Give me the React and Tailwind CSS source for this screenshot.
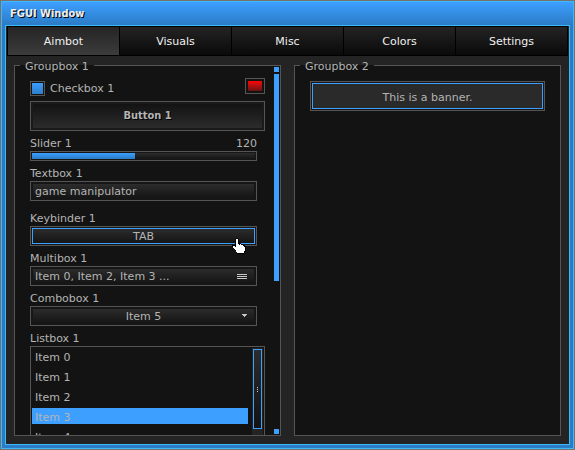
import React from "react";

const tabs = ["Aimbot", "Visuals", "Misc", "Colors", "Settings"];
const items = ["Item 0", "Item 1", "Item 2", "Item 3", "Item 4"];

const frame = "h-5 border border-[#555] bg-[#161616] p-[2px]";
const inner = "h-full w-full bg-linear-to-b from-[#2c2c2c] to-[#151515]";

function Groupbox({ title, children }) {
  return (
    <fieldset className="flex min-h-0 min-w-0 flex-1 flex-col border border-[#555] bg-[#131313]">
      <legend className="ml-[5px] h-[17px] px-[5px] leading-5">{title}</legend>
      <div className="-mt-2 flex min-h-0 flex-1 overflow-hidden">{children}</div>
    </fieldset>
  );
}

function Field({ id, label, className = "", children }) {
  return (
    <div className={`mr-2 flex flex-col ${className}`}>
      <label htmlFor={id} className="h-5 leading-[26px]">{label}</label>
      {children}
    </div>
  );
}

function Cursor() {
  return (
    <svg className="pointer-events-none absolute top-[11px] right-[10px]" width="14" height="16" viewBox="0 0 14 16" shapeRendering="crispEdges" aria-hidden="true">
      <path fill="#000" d="M4 0h2v1h1v4h2v1h2v1h2v1h1v5h-1v2h-1v1H5v-2H4v-1H3v-2H2v-1H1v-1H0V7h3V1h1z" />
      <path fill="#fff" d="M4 1h2v5h1v1h1V6h1v1h2v1h1v1h1v4h-1v2H5v-1H4v-2H3v-1H2v-1H1V8h2v1h1z" />
    </svg>
  );
}

export default function App() {
  return (
    <div className="h-screen bg-[#77716d] p-px font-['Verdana','DejaVu_Sans',sans-serif] text-[11px] text-[#b4b4b4]">
      <main className="flex h-full flex-col border border-[#3db8f8] bg-[#2b7cc6] px-[3px] pb-[3px]">
        <header className="-mx-[3px] h-[23px] bg-linear-to-b from-[#3d9fff] to-[#2b7cc6] pl-2">
          <h1 className="font-['Tahoma','DejaVu_Sans_Condensed',sans-serif] text-[11px] leading-[23px] font-bold text-[#f0f0f0] [text-shadow:1px_1px_0_#000]">FGUI Window</h1>
        </header>
        <div className="flex min-h-0 flex-1 flex-col border border-[#3db8f8] bg-[#242424]">
          <nav className="mx-px flex border-y border-r border-black">
            {tabs.map((tab, i) => (
              <button key={tab} type="button" className={`h-7 flex-1 border-l border-black bg-linear-to-b pt-[3px] text-[#f0f0f0] ${i === 0 ? "from-[#252525] to-[#3c3c3c]" : "from-[#242424] to-[#0a0a0a]"}`}>
                {tab}
              </button>
            ))}
          </nav>
          <div className="flex min-h-0 flex-1 gap-[13px] px-2 pt-px pb-2">
            <Groupbox title="Groupbox 1">
              <div className="flex min-w-0 flex-1 flex-col pr-[9px] pl-[15px]">
                <div className="flex items-start justify-between pt-3">
                  <label className="flex items-center gap-[5px] pt-[3px] leading-[15px]">
                    <input type="checkbox" defaultChecked className="size-[15px] appearance-none border border-[#555] bg-[#161616] bg-linear-to-b from-[#3d9fff] to-[#2b7cc6] bg-clip-content p-px" />
                    Checkbox 1
                  </label>
                  <button type="button" aria-label="Colour" className="h-4 w-5 border border-[#555] bg-[#131313] p-[2px]">
                    <span className="block h-full bg-linear-to-b from-[#ff0000] to-[#6a1010]" />
                  </button>
                </div>
                <button type="button" className="mt-[5px] h-[30px] shrink-0 border border-[#555] bg-[#1a1a1a] p-[2px] font-['Tahoma','DejaVu_Sans_Condensed',sans-serif] font-bold [text-shadow:1px_1px_0_#000]">
                  <span className="flex h-full items-center justify-center bg-linear-to-b from-[#131313] to-[#2c2c2c]">Button 1</span>
                </button>
                <div className="mr-2 flex h-5 shrink-0 justify-between leading-[26px]">
                  <label htmlFor="slider">Slider 1</label>
                  <output htmlFor="slider">120</output>
                </div>
                <div className="relative mr-2 h-[10px] shrink-0 border border-[#555] bg-[#161616] p-px">
                  <div className="h-full bg-linear-to-b from-[#2c2c2c] to-[#151515]">
                    <div className="h-full w-[46%] bg-linear-to-b from-[#3d9fff] to-[#2b7cc6]" />
                  </div>
                  <input id="slider" type="range" min="0" max="260" defaultValue="120" className="absolute inset-0 h-full w-full opacity-0" />
                </div>
                <Field id="text" label="Textbox 1">
                  <div className={frame}>
                    <input id="text" type="text" defaultValue="game manipulator" className={`${inner} block px-[2px]`} />
                  </div>
                </Field>
                <Field id="key" label="Keybinder 1" className="pt-[5px]">
                  <div className="relative h-5 border border-[#555] bg-[#161616] p-px">
                    <button id="key" type="button" className="block h-full w-full border border-[#3d9fff] bg-linear-to-b from-[#2c2c2c] to-[#151515] leading-4">TAB</button>
                    <Cursor />
                  </div>
                </Field>
                <Field id="multi" label="Multibox 1">
                  <div className={frame}>
                    <button id="multi" type="button" className={`${inner} flex items-center justify-between pr-[7px] pl-[2px] leading-4`}>
                      <span className="h-[14px]">Item 0, Item 2, Item 3 ...</span>
                      <svg width="10" height="5" viewBox="0 0 10 5" shapeRendering="crispEdges" aria-hidden="true"><path fill="#c8c8c8" d="M0 0h10v1H0zM0 2h10v1H0zM0 4h10v1H0z" /></svg>
                    </button>
                  </div>
                </Field>
                <Field id="combo" label="Combobox 1">
                  <div className={`${frame} relative`}>
                    <select id="combo" defaultValue="Item 5" className={`${inner} block appearance-none pt-px text-center leading-[14px]`}>
                      <option>Item 5</option>
                    </select>
                    <svg className="pointer-events-none absolute top-[7px] right-[9px]" width="5" height="3" viewBox="0 0 5 3" shapeRendering="crispEdges" aria-hidden="true"><path fill="#c8c8c8" d="M0 0h5v1H4v1H3v1H2V2H1V1H0z" /></svg>
                  </div>
                </Field>
                <span id="list-label" className="h-5 shrink-0 leading-[26px]">Listbox 1</span>
                <div className="flex shrink-0 border border-[#555] p-px">
                  <ul role="listbox" aria-labelledby="list-label" className="mr-1 flex flex-1 flex-col gap-1">
                    {items.map((item) => (
                      <li key={item} role="option" aria-selected={item === "Item 3"} className={`h-4 pl-[3px] leading-5 ${item === "Item 3" ? "bg-[#3d9fff]" : ""}`}>{item}</li>
                    ))}
                  </ul>
                  <div className="w-[11px] bg-[#242424] p-px">
                    <div className="flex h-20 flex-col items-center justify-center gap-px border border-[#3d9fff] bg-linear-to-b from-[#2c2c2c] to-[#131313]">
                      <i className="size-px bg-[#c8c8c8]" />
                      <i className="size-px bg-[#c8c8c8]" />
                      <i className="size-px bg-[#c8c8c8]" />
                    </div>
                  </div>
                </div>
              </div>
              <div className="mr-px flex w-[5px] flex-col gap-[2px] py-px">
                <div className="h-[5px] bg-[#3d9fff]" />
                <div className="flex-1">
                  <div className="h-[207px] bg-[#3d9fff]" />
                </div>
                <div className="h-[5px] bg-[#3d9fff]" />
              </div>
            </Groupbox>
            <Groupbox title="Groupbox 2">
              <div className="flex-1 px-[15px] pt-[15px]">
                <div className="h-[30px] border border-[#555] bg-[#161616] p-px">
                  <p className="h-full border border-[#3d9fff] bg-[#2a2a2a] text-center leading-[28px]">This is a banner.</p>
                </div>
              </div>
            </Groupbox>
          </div>
        </div>
      </main>
    </div>
  );
}
